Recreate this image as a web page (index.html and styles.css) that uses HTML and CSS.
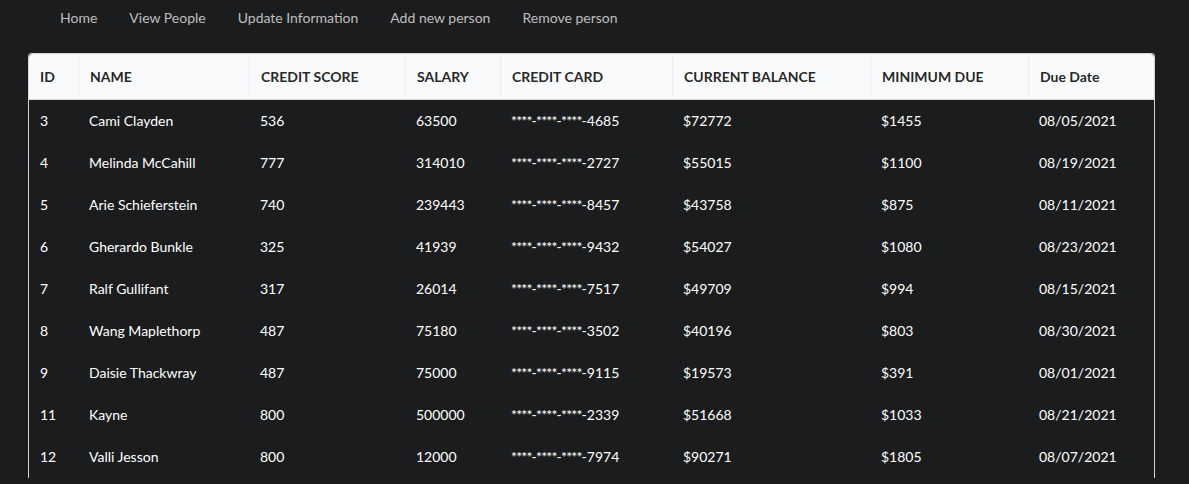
FILE: index.html
```html
<!DOCTYPE html>
<html>
<head>
<meta charset="utf-8">
<link rel="stylesheet" href="styles.css">
</head>
<body>
<nav class="menu">
  <a class="item">Home</a>
  <a class="item">View People</a>
  <a class="item">Update Information</a>
  <a class="item">Add new person</a>
  <a class="item">Remove person</a>
</nav>
<main class="content">
<table class="people">
  <colgroup>
    <col class="c-id"><col class="c-name"><col class="c-score"><col class="c-salary">
    <col class="c-card"><col class="c-bal"><col class="c-min"><col>
  </colgroup>
  <thead>
    <tr><th>ID</th><th>NAME</th><th>CREDIT SCORE</th><th>SALARY</th><th>CREDIT CARD</th><th>CURRENT BALANCE</th><th>MINIMUM DUE</th><th>Due Date</th></tr>
  </thead>
  <tbody>
    <tr><td>3</td><td>Cami Clayden</td><td>536</td><td>63500</td><td><span class="mask">****-****-****-</span>4685</td><td>$72772</td><td>$1455</td><td>08/05/2021</td></tr>
    <tr><td>4</td><td>Melinda McCahill</td><td>777</td><td>314010</td><td><span class="mask">****-****-****-</span>2727</td><td>$55015</td><td>$1100</td><td>08/19/2021</td></tr>
    <tr><td>5</td><td>Arie Schieferstein</td><td>740</td><td>239443</td><td><span class="mask">****-****-****-</span>8457</td><td>$43758</td><td>$875</td><td>08/11/2021</td></tr>
    <tr><td>6</td><td>Gherardo Bunkle</td><td>325</td><td>41939</td><td><span class="mask">****-****-****-</span>9432</td><td>$54027</td><td>$1080</td><td>08/23/2021</td></tr>
    <tr><td>7</td><td>Ralf Gullifant</td><td>317</td><td>26014</td><td><span class="mask">****-****-****-</span>7517</td><td>$49709</td><td>$994</td><td>08/15/2021</td></tr>
    <tr><td>8</td><td>Wang Maplethorp</td><td>487</td><td>75180</td><td><span class="mask">****-****-****-</span>3502</td><td>$40196</td><td>$803</td><td>08/30/2021</td></tr>
    <tr><td>9</td><td>Daisie Thackwray</td><td>487</td><td>75000</td><td><span class="mask">****-****-****-</span>9115</td><td>$19573</td><td>$391</td><td>08/01/2021</td></tr>
    <tr><td>11</td><td>Kayne</td><td>800</td><td>500000</td><td><span class="mask">****-****-****-</span>2339</td><td>$51668</td><td>$1033</td><td>08/21/2021</td></tr>
    <tr><td>12</td><td>Valli Jesson</td><td>800</td><td>12000</td><td><span class="mask">****-****-****-</span>7974</td><td>$90271</td><td>$1805</td><td>08/07/2021</td></tr>
  </tbody>
</table>
</main>
</body>
</html>
```
FILE: styles.css
```css
html, body {
  margin: 0;
  padding: 0;
  background: #1b1c1d;
  font-family: Lato, "Open Sans", "Liberation Sans", sans-serif;
  font-size: 14px;
  line-height: 20px;
  color: #ffffff;
}
.menu {
  display: flex;
  padding: 0 0 0 44px;
  height: 36px;
  align-items: center;
}
.menu .item {
  padding: 0 16px;
  color: rgba(255, 255, 255, 0.72);
  cursor: pointer;
}
.content {
  padding: 17px 34px 0 28px;
}
.people {
  width: 1127px;
  border-collapse: separate;
  border-spacing: 0;
  border: 1px solid #d4d4d5;
  border-bottom: none;
  border-radius: 4px 4px 0 0;
  table-layout: fixed;
}
.c-id { width: 49px; }
.c-name { width: 171px; }
.c-score { width: 156px; }
.c-salary { width: 95px; }
.c-card { width: 172px; }
.c-bal { width: 198px; }
.c-min { width: 158px; }
.people th {
  background: #f9fafb;
  color: rgba(0, 0, 0, 0.87);
  font-weight: 700;
  text-align: left;
  padding: 13px 11px 12px;
  border-bottom: 1px solid rgba(34, 36, 38, 0.15);
  border-left: 1px solid rgba(34, 36, 38, 0.06);
  white-space: nowrap;
}
.people th:first-child {
  border-left: none;
  border-top-left-radius: 4px;
}
.people th:last-child {
  border-top-right-radius: 4px;
}
.people td {
  padding: 11px 11px;
  color: #ffffff;
  white-space: nowrap;
}
.mask {
  letter-spacing: -0.8px;
  margin-right: 0.8px;
}
```
